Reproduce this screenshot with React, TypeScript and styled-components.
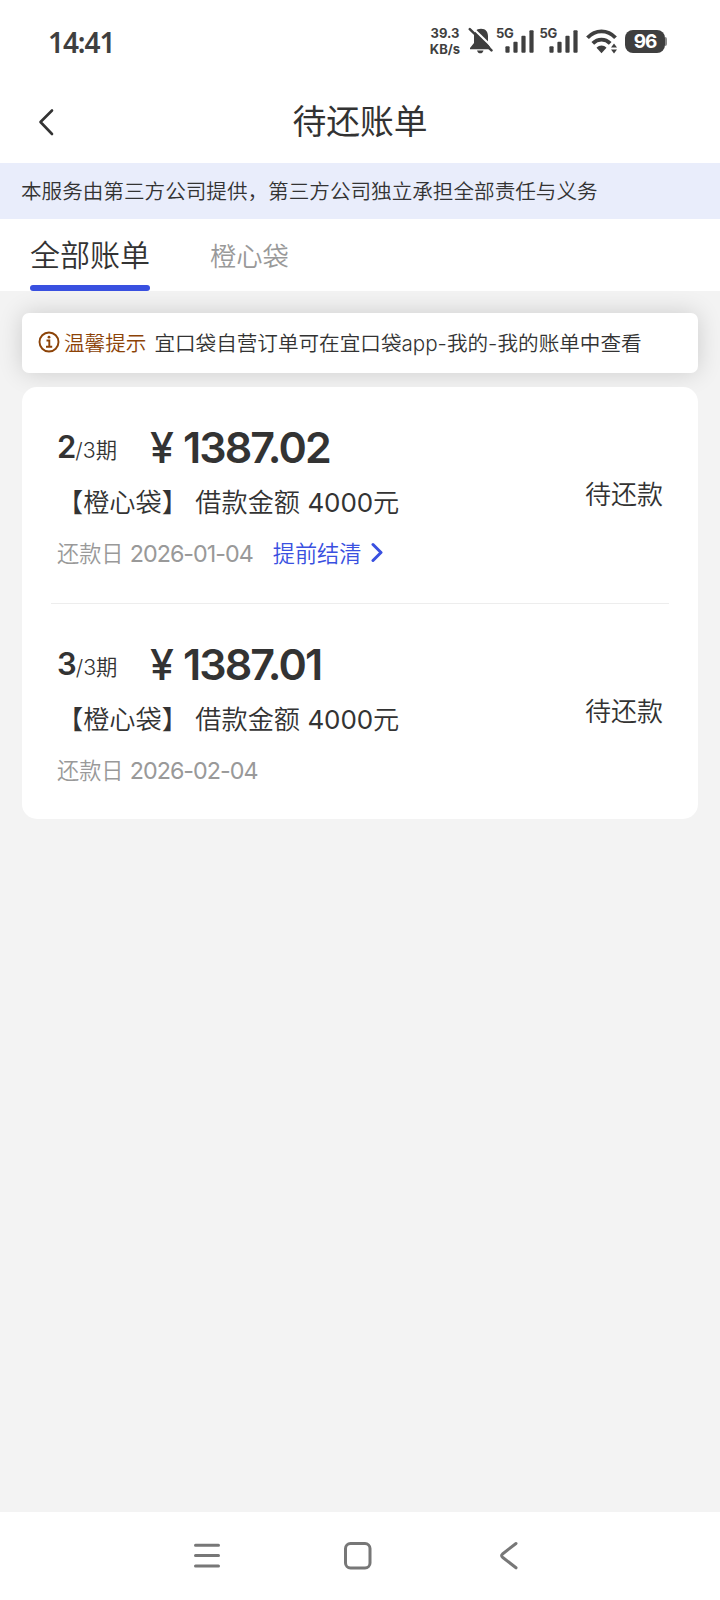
import React from 'react';
import styled, { createGlobalStyle } from 'styled-components';

const GlobalStyle = createGlobalStyle`
  * { box-sizing: border-box; }
  body {
    margin: 0;
    background: #f3f3f3;
    font-family: Inter, "Noto Sans CJK SC", sans-serif;
    font-weight: 350;
    color: #333;
  }
  svg { display: block; flex: none; }
`;

const Screen = styled.div`
  width: 720px;
  height: 1600px;
  display: flex;
  flex-direction: column;
  background: #f3f3f3;
  white-space: nowrap;
  overflow: hidden;
`;

const StatusBar = styled.div`
  height: 80px;
  display: flex;
  align-items: flex-start;
  justify-content: space-between;
  padding: 0 53px 0 48px;
  background: #fff;
  color: #3f3f3f;
`;

const Clock = styled.div`
  margin-top: 24px;
  font: 600 28px/36px "Noto Sans", sans-serif;
  letter-spacing: -1.1px;
`;

const StatusIcons = styled.div`
  display: flex;
  align-items: flex-start;
  margin-top: 27px;
`;

const NetSpeed = styled.div`
  width: 31px;
  margin: -1px 7px 0 0;
  font: 700 13px/15.5px Inter, sans-serif;
  text-align: center;
`;

const Signal = styled.div`
  display: flex;
  align-items: flex-start;
  margin-right: 5.5px;
`;

const SignalLabel = styled.span`
  width: 18px;
  margin: -1px -9px 0 0;
  font: 700 13px/14px Inter, sans-serif;
  letter-spacing: -0.4px;
`;

const Battery = styled.div`
  width: 40px;
  height: 23px;
  margin: 3px 0 0 7px;
  border-radius: 8px;
  background: #3f3f3f;
  color: #fff;
  font: 700 19px/24px Inter, sans-serif;
  letter-spacing: -1px;
  text-align: center;
`;

const BatteryTip = styled.div`
  width: 2px;
  height: 9px;
  margin-top: 10px;
  border-radius: 0 2px 2px 0;
  background: #8a8a8a;
`;

const TitleBar = styled.header`
  height: 83px;
  display: grid;
  grid-template-columns: 100px 1fr 100px;
  align-items: center;
  background: #fff;
`;

const BackButton = styled.button`
  margin: 0;
  padding: 0 0 0 38px;
  border: 0;
  background: none;
`;

const Title = styled.h1`
  margin: 0;
  font-size: 33.8px;
  line-height: 50px;
  font-weight: 400;
  text-align: center;
`;

const Notice = styled.div`
  height: 56px;
  padding-left: 21px;
  background: #e9edfb;
  font-size: 20.6px;
  line-height: 58px;
`;

const Tabs = styled.nav`
  height: 72px;
  display: flex;
  gap: 60px;
  padding-left: 30px;
  background: #fff;
`;

const Tab = styled.div<{ $active?: boolean }>`
  position: relative;
  height: 72px;
  font-size: ${(p) => (p.$active ? 30 : 26.3)}px;
  line-height: ${(p) => (p.$active ? 72 : 75)}px;
  color: ${(p) => (p.$active ? '#333' : '#999')};
`;

const TabLine = styled.span`
  position: absolute;
  left: 0;
  bottom: 0;
  width: 120px;
  height: 6px;
  border-radius: 3px;
  background: #3950e0;
`;

const Content = styled.main`
  flex: 1;
  padding: 22px 22px 0;
  display: flex;
  flex-direction: column;
  gap: 14px;
`;

const Tip = styled.div`
  height: 60px;
  display: flex;
  align-items: center;
  padding: 0 0 2px 16px;
  border-radius: 7px;
  background: #fff;
  box-shadow: 0 0 24px rgba(0, 0, 0, 0.16);
  font-size: 20.6px;
`;

const TipLabel = styled.span`
  margin: 0 8px 0 4px;
  color: #8c4307;
`;

const BillCard = styled.section`
  position: relative;
  height: 432px;
  padding: 0 29px;
  border-radius: 15px;
  background: #fff;
`;

const Bill = styled.article`
  height: 216px;
  display: flex;
  justify-content: space-between;
  padding: 37px 6px 0;
  & + & {
    border-top: 1px solid #ededed;
  }
`;

const BillInfo = styled.div`
  display: flex;
  flex-direction: column;
`;

const AmountRow = styled.div`
  height: 54px;
  display: flex;
`;

const Period = styled.div`
  width: 93px;
  line-height: 46px;
  font-size: 21.3px;
`;

const PeriodIndex = styled.span`
  font-size: 31px;
  font-weight: 600;
  letter-spacing: -1px;
`;

const Amount = styled.div`
  font-size: 43px;
  font-weight: 600;
  line-height: 46px;
  letter-spacing: -1.9px;
`;

const Currency = styled.span`
  display: inline-block;
  width: 33px;
  font-weight: 500;
`;

const Product = styled.div`
  height: 49px;
  line-height: 50px;
  font-size: 26.2px;
`;

const DueRow = styled.div`
  height: 50px;
  display: flex;
  align-items: center;
  font-size: 22.2px;
  color: #999;
`;

const Digits = styled.span<{ $size: number; $gap?: number }>`
  font-size: ${(p) => p.$size}px;
  font-weight: 400;
  letter-spacing: ${(p) => p.$gap ?? 0}px;
`;

const SettleLink = styled.a`
  display: flex;
  align-items: center;
  gap: 10px;
  margin-left: 20px;
  color: #3950e0;
`;

const BillStatus = styled.div`
  margin-top: 52px;
  font-size: 26px;
  line-height: 38px;
`;

const NavBar = styled.footer`
  height: 88px;
  display: flex;
  padding: 29px 0 0 193px;
  background: #fff;
`;

const HomeIcon = styled.svg`
  margin: 0 126px 0 121px;
`;

const bars = [
  [0, 18], [8, 13.5], [16, 7.5], [24, 2],
];

const SignalMeter = () => (
  <Signal>
    <SignalLabel>5G</SignalLabel>
    <svg width="29" height="27" viewBox="0 0 29 27" fill="#3f3f3f">
      {bars.map(([x, y]) => (
        <rect key={x} x={x + 0.4} y={y + 1.2} width="4.2" height={24.5 - y} rx="1" />
      ))}
    </svg>
  </Signal>
);

const BellIcon = styled.svg`
  margin-right: 3.5px;
`;

const MutedBell = () => (
  <BellIcon width="25" height="28" viewBox="0 0 25 28">
    <path d="M13 1.800c-5 0-7 3.500-7 7.500V16l-4 5v1.200h20.500v-1.200l-2.500-5V9.300C20 5.300 18 1.800 13 1.800Z" fill="#3f3f3f" />
    <path d="M9 23.500h6.500c-.6 2-1.700 2.800-3.200 2.800S9.600 25.500 9 23.500Z" fill="#3f3f3f" />
    <path d="M3.500-.2 26 21.800" stroke="#fff" strokeWidth="2.200" />
    <path d="M1.800 2.200 23.500 23.300" stroke="#3f3f3f" strokeWidth="2.500" strokeLinecap="round" />
  </BellIcon>
);

const WifiIcon = styled.svg`
  margin-left: 3px;
`;

const Wifi = () => (
  <WifiIcon width="32" height="27" viewBox="0 0 32 27" fill="none" stroke="#3f3f3f" strokeWidth="3.800">
    <path d="M1.500 10.800C9.500 2.300 21.500 2.300 29.500 10.800" />
    <path d="M6.800 16.300C11.800 11.300 19.200 11.300 24.200 16.300" />
    <path d="M10.500 20.700c3-3 7-3 10 0l-5 5.500Z" fill="#3f3f3f" stroke="none" />
    <path d="M25 20.500 28 16.500l3 4ZM25 22.500l3 4 3-4Z" fill="#3f3f3f" stroke="none" />
  </WifiIcon>
);

type BillData = { index: string; amount: string; date: string; early?: boolean };

const bills: BillData[] = [
  { index: '2', amount: '1387.02', date: '2026-01-04', early: true },
  { index: '3', amount: '1387.01', date: '2026-02-04' },
];

export default function App() {
  return (
    <Screen>
      <GlobalStyle />
      <StatusBar>
        <Clock>14:41</Clock>
        <StatusIcons>
          <NetSpeed>39.3<br />KB/s</NetSpeed>
          <MutedBell />
          <SignalMeter />
          <SignalMeter />
          <Wifi />
          <Battery>96</Battery>
          <BatteryTip />
        </StatusIcons>
      </StatusBar>
      <TitleBar>
        <BackButton aria-label="返回">
          <svg width="17" height="28" viewBox="0 0 17 28" fill="none" stroke="#333" strokeWidth="2.600" strokeLinecap="round" strokeLinejoin="round">
            <path d="M14 2.500 2.500 14 14 26" />
          </svg>
        </BackButton>
        <Title>待还账单</Title>
      </TitleBar>
      <Notice>本服务由第三方公司提供，第三方公司独立承担全部责任与义务</Notice>
      <Tabs>
        <Tab $active>全部账单<TabLine /></Tab>
        <Tab>橙心袋</Tab>
      </Tabs>
      <Content>
        <Tip>
          <svg width="22" height="22" viewBox="0 0 22 22" fill="none" stroke="#8c4307" strokeWidth="1.900">
            <circle cx="11" cy="11" r="9.500" />
            <path d="M8.500 9.500H11.300V15.500M8 15.700h6.200" />
            <circle cx="11" cy="6.200" r="1.400" fill="#8c4307" stroke="none" />
          </svg>
          <TipLabel>温馨提示</TipLabel>
          <span>宜口袋自营订单可在宜口袋app-我的-我的账单中查看</span>
        </Tip>
        <BillCard>
          {bills.map((b) => (
            <Bill key={b.index}>
              <BillInfo>
                <AmountRow>
                  <Period><PeriodIndex>{b.index}</PeriodIndex>/3期</Period>
                  <Amount><Currency>¥</Currency>{b.amount}</Amount>
                </AmountRow>
                <Product>【橙心袋】 借款金额 <Digits $size={26} $gap={-0.1}>4000</Digits>元</Product>
                <DueRow>
                  <span>还款日 <Digits $size={23.3} $gap={-1}>{b.date}</Digits></span>
                  {b.early && (
                    <SettleLink>
                      提前结清
                      <svg width="12" height="20" viewBox="0 0 12 20" fill="none" stroke="#3950e0" strokeWidth="3" strokeLinecap="round" strokeLinejoin="round">
                        <path d="M2 2.500 10 10.500 2 18.500" />
                      </svg>
                    </SettleLink>
                  )}
                </DueRow>
              </BillInfo>
              <BillStatus>待还款</BillStatus>
            </Bill>
          ))}
        </BillCard>
      </Content>
      <NavBar>
        <svg width="28" height="30" viewBox="0 0 28 30" stroke="#777" strokeWidth="3" strokeLinecap="round">
          <path d="M2.500 4.300h23M2.500 14.600h23M2.500 25h23" />
        </svg>
        <HomeIcon width="31" height="30" viewBox="0 0 31 30" fill="none" stroke="#777" strokeWidth="3">
          <rect x="3.500" y="2.500" width="24.500" height="24.500" rx="5" />
        </HomeIcon>
        <svg width="20" height="30" viewBox="0 0 20 30" fill="none" stroke="#777" strokeWidth="3" strokeLinecap="round" strokeLinejoin="round">
          <path d="M17 2.500 3.500 13q-1.800 1.600 0 3.200L17 26.800" />
        </svg>
      </NavBar>
    </Screen>
  );
}
